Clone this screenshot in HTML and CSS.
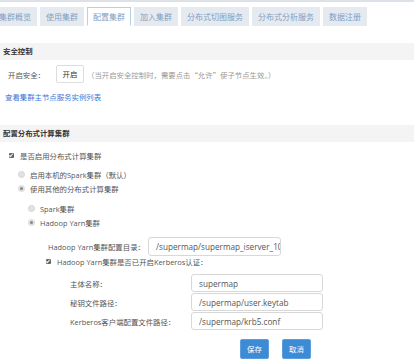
FILE: index.html
```html
<!DOCTYPE html>
<html lang="zh-CN">

<head>
    <meta charset="UTF-8">
    <meta name="viewport" content="width=device-width, initial-scale=1.0">
    <title>配置集群</title>
    <link rel="stylesheet" href="styles.css">
</head>

<body>
    <div class="page">
        <ul class="tabs">
            <li class="tab">集群概览</li>
            <li class="tab">使用集群</li>
            <li class="tab active">配置集群</li>
            <li class="tab">加入集群</li>
            <li class="tab">分布式切图服务</li>
            <li class="tab">分布式分析服务</li>
            <li class="tab">数据注册</li>
        </ul>

        <div class="section-title first">安全控制</div>
        <div class="security">
            <span class="security-label">开启安全：</span>
            <span class="btn-plain">开启</span>
            <span class="hint">（当开启安全控制时，需要点击“允许”使子节点生效。）</span>
        </div>
        <a class="link" href="#">查看集群主节点服务实例列表</a>

        <div class="section-title second">配置分布式计算集群</div>

        <label class="option enable">
            <span class="checkbox checked"></span>是否启用分布式计算集群
        </label>

        <div class="group level1">
            <label class="option"><span class="radio"></span>启用本机的Spark集群（默认）</label>
            <label class="option"><span class="radio checked"></span>使用其他的分布式计算集群</label>
        </div>

        <div class="group level2">
            <label class="option"><span class="radio"></span>Spark集群</label>
            <label class="option"><span class="radio checked"></span>Hadoop Yarn集群</label>
        </div>

        <div class="field yarn-dir">
            <span class="field-label">Hadoop Yarn集群配置目录：</span>
            <input class="text-input" type="text" value="/supermap/supermap_iserver_100">
        </div>

        <label class="option kerberos">
            <span class="checkbox checked"></span>Hadoop Yarn集群是否已开启Kerberos认证：
        </label>

        <div class="kerberos-fields">
            <div class="field">
                <span class="field-label">主体名称：</span>
                <input class="text-input" type="text" value="supermap">
            </div>
            <div class="field">
                <span class="field-label">秘钥文件路径：</span>
                <input class="text-input" type="text" value="/supermap/user.keytab">
            </div>
            <div class="field">
                <span class="field-label">Kerberos客户端配置文件路径：</span>
                <input class="text-input" type="text" value="/supermap/krb5.conf">
            </div>
        </div>

        <div class="actions">
            <span class="btn-primary">保存</span>
            <span class="btn-primary">取消</span>
        </div>
    </div>
</body>

</html>
```

FILE: styles.css
```css
* {
    box-sizing: border-box;
}

body {
    margin: 0;
    background: #fff;
    font-family: "Open Sans", "Noto Sans CJK SC", sans-serif;
    font-size: 7.4px;
    color: #555;
    overflow: hidden;
}

.page {
    border-top: 2px solid #dde2e8;
    height: 364px;
}

/* 頁籤 */
.tabs {
    display: flex;
    gap: 3px;
    margin: 5px 0 0 -7px;
    padding: 0;
    list-style: none;
}

.tab {
    height: 19px;
    padding: 0 5px;
    line-height: 17px;
    font-size: 8px;
    background-color: #e5eaf0;
    color: #819ec3;
    border: 1px solid #e5eaf0;
    white-space: nowrap;
}

.tab.active {
    background-color: #fff;
    border-color: #b7d0ea;
    border-bottom-color: #fff;
}

.section-title {
    height: 17px;
    line-height: 17px;
    padding-left: 3px;
    background-color: #f4f4f4;
    color: #333;
    font-weight: bold;
}

.section-title.first {
    margin-top: 17px;
}

.section-title.second {
    margin-top: 23px;
}

.security {
    display: flex;
    align-items: center;
    height: 18px;
    margin-top: 5px;
    padding-left: 8px;
}

.security-label {
    width: 48px;
    color: #555;
}

.btn-plain {
    width: 28px;
    height: 18px;
    line-height: 16px;
    text-align: center;
    border: 1px solid #ddd;
    border-radius: 2px;
    color: #333;
}

.hint {
    margin-left: 3px;
    font-family: "Noto Sans CJK SC", sans-serif;
    color: #999;
}

.link {
    display: block;
    height: 10px;
    line-height: 10px;
    margin-top: 9px;
    padding-left: 5px;
    color: #3b78d8;
    text-decoration: none;
}

.option {
    display: flex;
    align-items: center;
    height: 14px;
    color: #555;
    white-space: nowrap;
}

.enable {
    margin-top: 6px;
    padding-left: 9px;
}

.checkbox {
    width: 5px;
    height: 5px;
    margin-right: 6px;
    background-color: #666;
    border-radius: 1px;
    position: relative;
}

.checkbox.checked::after {
    content: "";
    position: absolute;
    left: 1px;
    top: 0;
    width: 1px;
    height: 3px;
    border: solid #fff;
    border-width: 0 1px 1px 0;
    transform: rotate(40deg);
}

.radio {
    width: 7px;
    height: 7px;
    margin-right: 5px;
    border-radius: 50%;
    background-color: #e2e2e2;
    border: 1px solid #d4d4d4;
}

.radio.checked {
    background-color: #888;
    border: 2px solid #e0e0e0;
}

.level1 {
    margin-top: 5px;
    padding-left: 18px;
}

.level2 {
    margin-top: 6px;
    padding-left: 28px;
}

.field {
    display: flex;
    align-items: center;
}

.field-label {
    color: #555;
    white-space: nowrap;
}

.text-input {
    font: inherit;
    font-size: 8.2px;
    color: #555;
    border: 1px solid #d8d8d8;
    border-radius: 3px;
    background: #fff;
    outline: none;
}

.yarn-dir {
    margin-top: 8px;
    padding-left: 48px;
}

.yarn-dir .field-label {
    width: 100px;
}

.yarn-dir .text-input {
    width: 133px;
    height: 19px;
    padding: 0 0 0 7px;
}

.kerberos {
    height: 10px;
    padding-left: 46px;
}

.kerberos-fields {
    display: flex;
    flex-direction: column;
    gap: 1px;
    margin-top: 8px;
    padding-left: 70px;
}

.kerberos-fields .field-label {
    width: 121px;
}

.kerberos-fields .text-input {
    width: 132px;
    height: 18px;
    padding: 0 0 0 7px;
}

.actions {
    display: flex;
    gap: 13px;
    margin-top: 9px;
    padding-left: 240px;
}

.btn-primary {
    width: 29px;
    height: 20px;
    line-height: 18px;
    text-align: center;
    color: #fff;
    background-color: #3d8bd4;
    border: 1px solid #5b9fdf;
    border-radius: 2px;
}
```
